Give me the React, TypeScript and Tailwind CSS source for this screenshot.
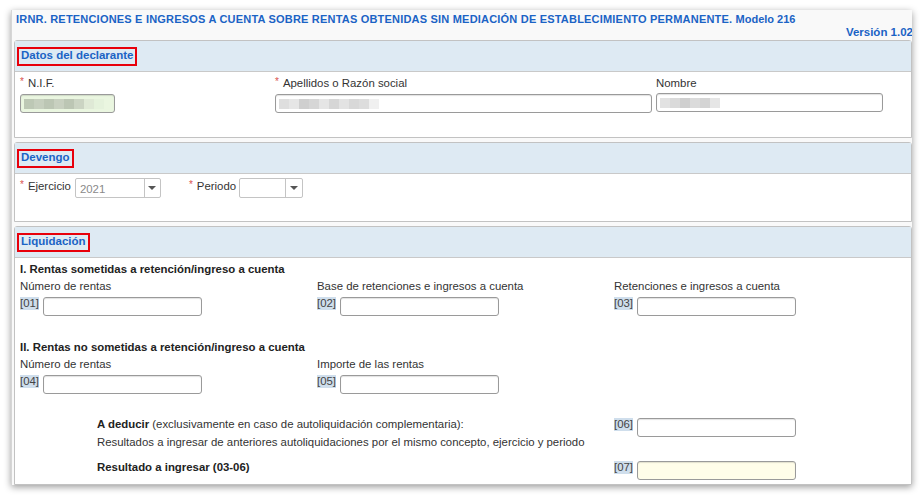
import React from "react";

const F = { fontFamily: '"Liberation Sans", Arial, sans-serif' };

function Blur({ cells }: { cells: string[] }) {
  return (
    <div className="flex h-[10px] blur-[0.6px]">
      {cells.map((c, i) => (
        <div key={i} className="w-[10px] h-full" style={{ background: c }} />
      ))}
    </div>
  );
}

function Input({ w, bg = "bg-white", children }: { w: string; bg?: string; children?: React.ReactNode }) {
  return (
    <div
      className={`${w} ${bg} h-[19px] border border-[#9a9a9a] rounded-[3px] shadow-[inset_0_1px_1px_rgba(0,0,0,0.12)] flex items-center px-[3px] overflow-hidden`}
    >
      {children}
    </div>
  );
}

function Code({ n }: { n: string }) {
  return <span className="bg-[#cfdeec] text-[#444] text-[11.4px] leading-[13px] h-[13px] self-start">[{n}]</span>;
}

function Field({ label, code, bg }: { label?: string; code: string; bg?: string }) {
  return (
    <div className="w-[297px] flex flex-col">
      {label && <div className="text-[11.4px] leading-[14px] text-[#333] h-[14px]">{label}</div>}
      <div className={`flex gap-[4px] ${label ? "mt-[4px]" : ""}`}>
        <Code n={code} />
        <Input w="w-[159px]" bg={bg} />
      </div>
    </div>
  );
}

function Header({ title }: { title: string }) {
  return (
    <div className="h-[31px] bg-[#deeaf3] border-b border-[#c9c9c9] flex items-center pl-[2px]">
      <span className="border-2 border-[#e8000b] px-[2px] h-[19px] flex items-center text-[11.5px] font-bold text-[#1b63c5]">
        {title}
      </span>
    </div>
  );
}

function Req() {
  return <span className="text-[#d9534f] text-[10px] mr-[4px] relative -top-[2px]">*</span>;
}

function Select({ w, div, value }: { w: string; div: string; value?: string }) {
  return (
    <div className={`${w} h-[20px] border border-[#c4c4c4] rounded-[2px] bg-white flex`}>
      <div className={`${div} text-[11.4px] text-[#8a8a8a] pl-[4px] leading-[20px]`}>{value}</div>
      <div className="flex-1 border-l border-[#c4c4c4] flex items-center justify-center">
        <div className="w-0 h-0 border-l-[4px] border-r-[4px] border-t-[4px] border-l-transparent border-r-transparent border-t-[#555]" />
      </div>
    </div>
  );
}

export default function App() {
  return (
    <div className="w-[922px] h-[495px] bg-white relative overflow-hidden" style={F}>
      <div className="absolute left-[11px] top-[10px] w-[901px] h-[475px] bg-[#f9f9f9] border-l border-[#d6d6d6] shadow-[0_2px_7px_rgba(0,0,0,0.4)] overflow-hidden flex flex-col">
        <div className="pl-[4px] pt-[3px] text-[11px] font-bold text-[#1b63c5] leading-[13px] tracking-[0.2px] whitespace-nowrap">
          IRNR. RETENCIONES E INGRESOS A CUENTA SOBRE RENTAS OBTENIDAS SIN MEDIACIÓN DE ESTABLECIMIENTO PERMANENTE.{" "}
          <span className="tracking-normal">Modelo 216</span>
        </div>
        <div className="text-right pr-0 text-[11.5px] font-bold text-[#1b63c5] leading-[13px] -mr-[1px]">Versión 1.02</div>

        {/* Panel 1 */}
        <div className="ml-[2px] mt-[1px] border border-[#c2c2c2] rounded-t-[3px] bg-white">
          <Header title="Datos del declarante" />
          <div className="h-[65px] flex pl-[5px] pt-[4px] text-[11.4px] text-[#333]">
            <div className="w-[255px]">
              <div className="leading-[14px]"><Req />N.I.F.</div>
              <div className="mt-[3px]">
                <Input w="w-[95px]" bg="bg-[#eaf6e0]">
                  <Blur cells={["#bdc8b5", "#c6cfbe", "#bcc6b4", "#c8d0c0", "#bcc6b4", "#cbd4c3", "#dfe9d6", "#e5f2dc"]} />
                </Input>
              </div>
            </div>
            <div className="w-[381px]">
              <div className="leading-[14px]"><Req />Apellidos o Razón social</div>
              <div className="mt-[3px]">
                <Input w="w-[377px]">
                  <Blur cells={["#dedede", "#e6e6e6", "#cfcfcf", "#d6d6d6", "#e5e5e5", "#d6d6d6", "#e3e3e3", "#d8d8d8", "#dddddd", "#f0f0f0"]} />
                </Input>
              </div>
            </div>
            <div className="w-[230px]">
              <div className="leading-[14px]">Nombre</div>
              <div className="mt-[3px]">
                <Input w="w-[227px]">
                  <Blur cells={["#e2e2e2", "#dadada", "#cfcfcf", "#dbdbdb", "#d4d4d4", "#e6e6e6"]} />
                </Input>
              </div>
            </div>
          </div>
        </div>

        {/* Panel 2 */}
        <div className="ml-[2px] mt-[4px] border border-[#c2c2c2] rounded-t-[3px] bg-white">
          <Header title="Devengo" />
          <div className="h-[47px] flex pl-[5px] pt-[4px] text-[11.4px] text-[#333]">
            <div className="flex items-start">
              <div className="leading-[14px] mt-[1px]"><Req />Ejercicio</div>
              <div className="ml-[4px]">
                <Select w="w-[86px]" div="w-[68px]" value="2021" />
              </div>
            </div>
            <div className="flex items-start ml-[28px]">
              <div className="leading-[14px] mt-[1px]"><Req />Periodo</div>
              <div className="ml-[3px]">
                <Select w="w-[64px]" div="w-[45px]" />
              </div>
            </div>
          </div>
        </div>

        {/* Panel 3 */}
        <div className="ml-[2px] mt-[4px] border border-[#c2c2c2] rounded-t-[3px] bg-white flex-1">
          <Header title="Liquidación" />
          <div className="pl-[5px] pt-[4px] text-[11.4px] text-[#333]">
            <div className="font-bold text-[#222] leading-[14px]">I. Rentas sometidas a retención/ingreso a cuenta</div>
            <div className="flex mt-[3px]">
              <Field label="Número de rentas" code="01" />
              <Field label="Base de retenciones e ingresos a cuenta" code="02" />
              <Field label="Retenciones e ingresos a cuenta" code="03" />
            </div>
            <div className="font-bold text-[#222] leading-[14px] mt-[24px]">II. Rentas no sometidas a retención/ingreso a cuenta</div>
            <div className="flex mt-[3px]">
              <Field label="Número de rentas" code="04" />
              <Field label="Importe de las rentas" code="05" />
            </div>
            <div className="flex mt-[23px]">
              <div className="w-[594px] pl-[77px]">
                <div className="leading-[14px]">
                  <span className="font-bold text-[#222]">A deducir</span> (exclusivamente en caso de autoliquidación complementaria):
                </div>
                <div className="leading-[14px] mt-[4px]">
                  Resultados a ingresar de anteriores autoliquidaciones por el mismo concepto, ejercicio y periodo
                </div>
              </div>
              <div className="mt-[1px]">
                <Field code="06" />
              </div>
            </div>
            <div className="flex mt-[11px]">
              <div className="w-[594px] pl-[77px] leading-[14px] font-bold text-[#222]">Resultado a ingresar (03-06)</div>
              <div className="mt-[1px]">
                <Field code="07" bg="bg-[#fffde9]" />
              </div>
            </div>
          </div>
        </div>
      </div>
    </div>
  );
}
